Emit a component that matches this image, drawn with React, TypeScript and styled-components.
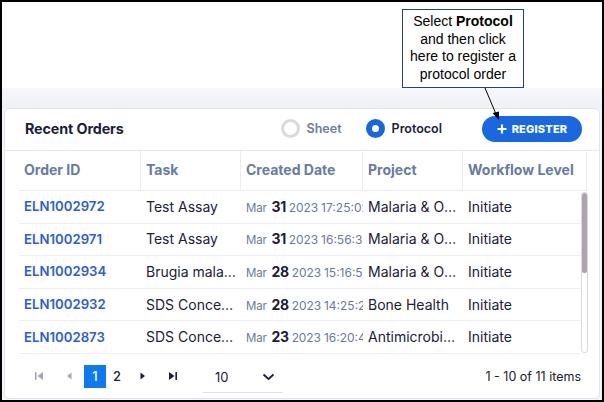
import React from "react";
import styled, { createGlobalStyle } from "styled-components";

const Global = createGlobalStyle`
  html, body { margin: 0; padding: 0; background: #fff; }
  * { box-sizing: border-box; }
  body { font-family: "Inter", "Noto Sans", sans-serif; }
`;

const Frame = styled.div`
  position: relative;
  width: 604px;
  height: 402px;
  border: 2px solid #000;
  display: flex;
  flex-direction: column;
  background: #fff;
  overflow: hidden;
`;

const TopSpace = styled.div`
  height: 86px;
  flex: none;
  background: #fff;
`;

const Band = styled.div`
  flex: 1;
  background: linear-gradient(#f6f7fb, #eef1f7 20px, #f4f6fa 21px);
  padding: 20px 2px 0 2px;
  display: flex;
  flex-direction: column;
`;

const Card = styled.div`
  background: #fff;
  border: 1px solid #dfe4ee;
  border-radius: 5px;
  height: 291px;
  display: flex;
  flex-direction: column;
`;

const CardHeader = styled.div`
  height: 42px;
  border-bottom: 1px solid #e3e8f0;
  display: flex;
  align-items: center;
  padding: 0 17px 2px 20px;
`;

const Title = styled.div`
  font-size: 14.3px;
  font-weight: 700;
  color: #1b2038;
  letter-spacing: -0.1px;
  flex: 1;
`;

const RadioGroup = styled.div`
  display: flex;
  align-items: center;
  gap: 24px;
`;

const RadioItem = styled.div`
  display: flex;
  align-items: center;
  gap: 7px;
`;

const RadioCircle = styled.span<{ $on?: boolean }>`
  width: 19px;
  height: 19px;
  border-radius: 50%;
  border: ${(p) => (p.$on ? "6px solid #1766df" : "3px solid #d6dae1")};
  background: #fff;
  display: inline-block;
`;

const RadioLabel = styled.span<{ $on?: boolean }>`
  font-size: 12.5px;
  font-weight: 600;
  color: ${(p) => (p.$on ? "#1d2236" : "#6f7d99")};
`;

const RegisterButton = styled.button`
  margin-left: 40px;
  width: 100px;
  height: 26px;
  border: none;
  border-radius: 13px;
  background: #1968e0;
  color: #fff;
  font-family: inherit;
  font-size: 11px;
  font-weight: 800;
  letter-spacing: 0.2px;
  display: flex;
  align-items: center;
  justify-content: center;
  gap: 5px;
  padding: 0;
`;

const HeadRow = styled.div`
  display: grid;
  grid-template-columns: 122px 100px 122px 100px 124px;
  margin: 0 12px 0 14px;
  height: 40px;
  border-bottom: 1px solid #e8ebf1;
`;

const HeadCell = styled.div`
  border-right: 1px solid #e8ebf1;
  display: flex;
  align-items: center;
  padding: 0 0 2px 5px;
  font-size: 14px;
  font-weight: 700;
  color: #687ba3;
  white-space: nowrap;
  overflow: hidden;
`;

const BodyWrap = styled.div`
  display: flex;
  margin-left: 14px;
  height: 163px;
`;

const Rows = styled.div`
  width: 562px;
  display: flex;
  flex-direction: column;
`;

const Row = styled.div`
  display: grid;
  grid-template-columns: 122px 100px 122px 100px 118px;
  height: 32.6px;
  border-bottom: 1px solid #eceef2;
  align-items: center;
  padding-bottom: 1px;
`;

const Cell = styled.div<{ $link?: boolean }>`
  padding: 0 4px 0 5px;
  font-size: ${(p) => (p.$link ? "13.2px" : "14px")};
  font-weight: ${(p) => (p.$link ? 600 : 400)};
  color: ${(p) => (p.$link ? "#2c5dd6" : "#1c2033")};
  white-space: nowrap;
  overflow: hidden;
  text-overflow: ellipsis;
`;

const DateCell = styled.div`
  padding-left: 5px;
  white-space: nowrap;
  overflow: hidden;
  color: #6d7a93;
  font-size: 12px;
  display: flex;
  align-items: baseline;
  gap: 3px;
`;

const Month = styled.span`
  font-size: 11.5px;
  letter-spacing: -0.2px;
  margin-right: 2px;
`;

const Day = styled.span`
  font-size: 14px;
  font-weight: 700;
  color: #1c2033;
  letter-spacing: -0.4px;
`;

const Year = styled.span`
  letter-spacing: -0.1px;
`;

const ScrollTrack = styled.div`
  width: 7px;
  margin-top: 1px;
  height: 161px;
  border: 1px solid #d9dbe0;
  border-radius: 3px;
  display: flex;
  flex-direction: column;
  overflow: hidden;
`;

const ScrollThumb = styled.div`
  height: 80px;
  background: #b1a3ad;
  border-radius: 2px;
`;

const Pager = styled.div`
  flex: 1;
  display: flex;
  align-items: center;
  padding: 0 18px 0 19px;
`;

const NavBtn = styled.div`
  width: 30px;
  height: 22px;
  display: flex;
  align-items: center;
  justify-content: center;
`;

const PageBtn = styled.div<{ $active?: boolean }>`
  width: 22px;
  height: 23px;
  display: flex;
  align-items: center;
  justify-content: center;
  font-size: 13px;
  font-weight: 500;
  background: ${(p) => (p.$active ? "#0d7af2" : "transparent")};
  color: ${(p) => (p.$active ? "#fff" : "#1c2033")};
`;

const PageSize = styled.div`
  margin-left: 15px;
  width: 80px;
  height: 32px;
  border-bottom: 1px solid #dfe1e6;
  display: flex;
  align-items: center;
  justify-content: space-between;
  padding: 0 8px 0 12px;
  margin-top: 2px;
  font-size: 13px;
  color: #1c2033;
`;

const Items = styled.div`
  margin-left: auto;
  font-size: 12.5px;
  color: #1c2033;
`;

const Callout = styled.div`
  position: absolute;
  left: 400px;
  top: 7px;
  width: 122px;
  height: 79px;
  border: 1px solid #27446c;
  background: #fff;
  font-family: "Liberation Sans", Arial, sans-serif;
  font-size: 14px;
  line-height: 17.5px;
  text-align: center;
  color: #000;
  padding-top: 3px;
  z-index: 2;
`;

const Arrow = styled.svg`
  position: absolute;
  left: 476px;
  top: 84px;
  z-index: 2;
`;

type Order = {
  id: string;
  task: string;
  day: string;
  time: string;
  project: string;
};

const orders: Order[] = [
  { id: "ELN1002972", task: "Test Assay", day: "31", time: "17:25:02", project: "Malaria & Other Diseases" },
  { id: "ELN1002971", task: "Test Assay", day: "31", time: "16:56:36", project: "Malaria & Other Diseases" },
  { id: "ELN1002934", task: "Brugia malayi Assay", day: "28", time: "15:16:53", project: "Malaria & Other Diseases" },
  { id: "ELN1002932", task: "SDS Concentration", day: "28", time: "14:25:21", project: "Bone Health" },
  { id: "ELN1002873", task: "SDS Concentration", day: "23", time: "16:20:45", project: "Antimicrobial Resistance" },
];

const FirstIcon = ({ c }: { c: string }) => (
  <svg width="10" height="10" viewBox="0 0 10 10">
    <rect x="1" y="1" width="1.6" height="8" fill={c} />
    <path d="M9 1 L3.5 5 L9 9 Z" fill={c} />
  </svg>
);
const PrevIcon = ({ c }: { c: string }) => (
  <svg width="10" height="10" viewBox="0 0 10 10">
    <path d="M7.5 1.5 L3 5 L7.5 8.5 Z" fill={c} />
  </svg>
);
const NextIcon = ({ c }: { c: string }) => (
  <svg width="10" height="10" viewBox="0 0 10 10">
    <path d="M2.5 1.5 L7 5 L2.5 8.5 Z" fill={c} />
  </svg>
);
const LastIcon = ({ c }: { c: string }) => (
  <svg width="10" height="10" viewBox="0 0 10 10">
    <path d="M1 1 L6.5 5 L1 9 Z" fill={c} />
    <rect x="7.4" y="1" width="1.6" height="8" fill={c} />
  </svg>
);

export default function App() {
  return (
    <>
      <Global />
      <Frame>
        <TopSpace />
        <Band>
          <Card>
            <CardHeader>
              <Title>Recent Orders</Title>
              <RadioGroup>
                <RadioItem>
                  <RadioCircle />
                  <RadioLabel>Sheet</RadioLabel>
                </RadioItem>
                <RadioItem>
                  <RadioCircle $on />
                  <RadioLabel $on>Protocol</RadioLabel>
                </RadioItem>
              </RadioGroup>
              <RegisterButton>
                <svg width="10" height="10" viewBox="0 0 10 10">
                  <path d="M5 0.5 V9.5 M0.5 5 H9.5" stroke="#fff" strokeWidth="2.2" />
                </svg>
                REGISTER
              </RegisterButton>
            </CardHeader>
            <HeadRow>
              <HeadCell>Order ID</HeadCell>
              <HeadCell>Task</HeadCell>
              <HeadCell>Created Date</HeadCell>
              <HeadCell>Project</HeadCell>
              <HeadCell>Workflow Level</HeadCell>
            </HeadRow>
            <BodyWrap>
              <Rows>
                {orders.map((o) => (
                  <Row key={o.id}>
                    <Cell $link>{o.id}</Cell>
                    <Cell>{o.task}</Cell>
                    <DateCell>
                      <Month>Mar</Month>
                      <Day>{o.day}</Day>
                      <Year>2023</Year>
                      <span>{o.time}</span>
                    </DateCell>
                    <Cell>{o.project}</Cell>
                    <Cell>Initiate</Cell>
                  </Row>
                ))}
              </Rows>
              <ScrollTrack>
                <ScrollThumb />
              </ScrollTrack>
            </BodyWrap>
            <Pager>
              <NavBtn><FirstIcon c="#a2a9b4" /></NavBtn>
              <NavBtn><PrevIcon c="#a2a9b4" /></NavBtn>
              <PageBtn $active>1</PageBtn>
              <PageBtn>2</PageBtn>
              <NavBtn><NextIcon c="#1c2033" /></NavBtn>
              <NavBtn><LastIcon c="#1c2033" /></NavBtn>
              <PageSize>
                <span>10</span>
                <svg width="13" height="8" viewBox="0 0 13 8">
                  <path d="M1.5 1.5 L6.5 6 L11.5 1.5" stroke="#1c2033" strokeWidth="1.8" fill="none" />
                </svg>
              </PageSize>
              <Items>1 - 10 of 11 items</Items>
            </Pager>
          </Card>
        </Band>
        <Callout>
          Select <b>Protocol</b>
          <br />
          and then click
          <br />
          here to register a
          <br />
          protocol order
        </Callout>
        <Arrow width="28" height="36" viewBox="0 0 28 36">
          <line x1="7" y1="2" x2="18" y2="28" stroke="#000" strokeWidth="1" />
          <path d="M21 34 L14.5 27 L21 25.5 Z" fill="#000" />
        </Arrow>
      </Frame>
    </>
  );
}
